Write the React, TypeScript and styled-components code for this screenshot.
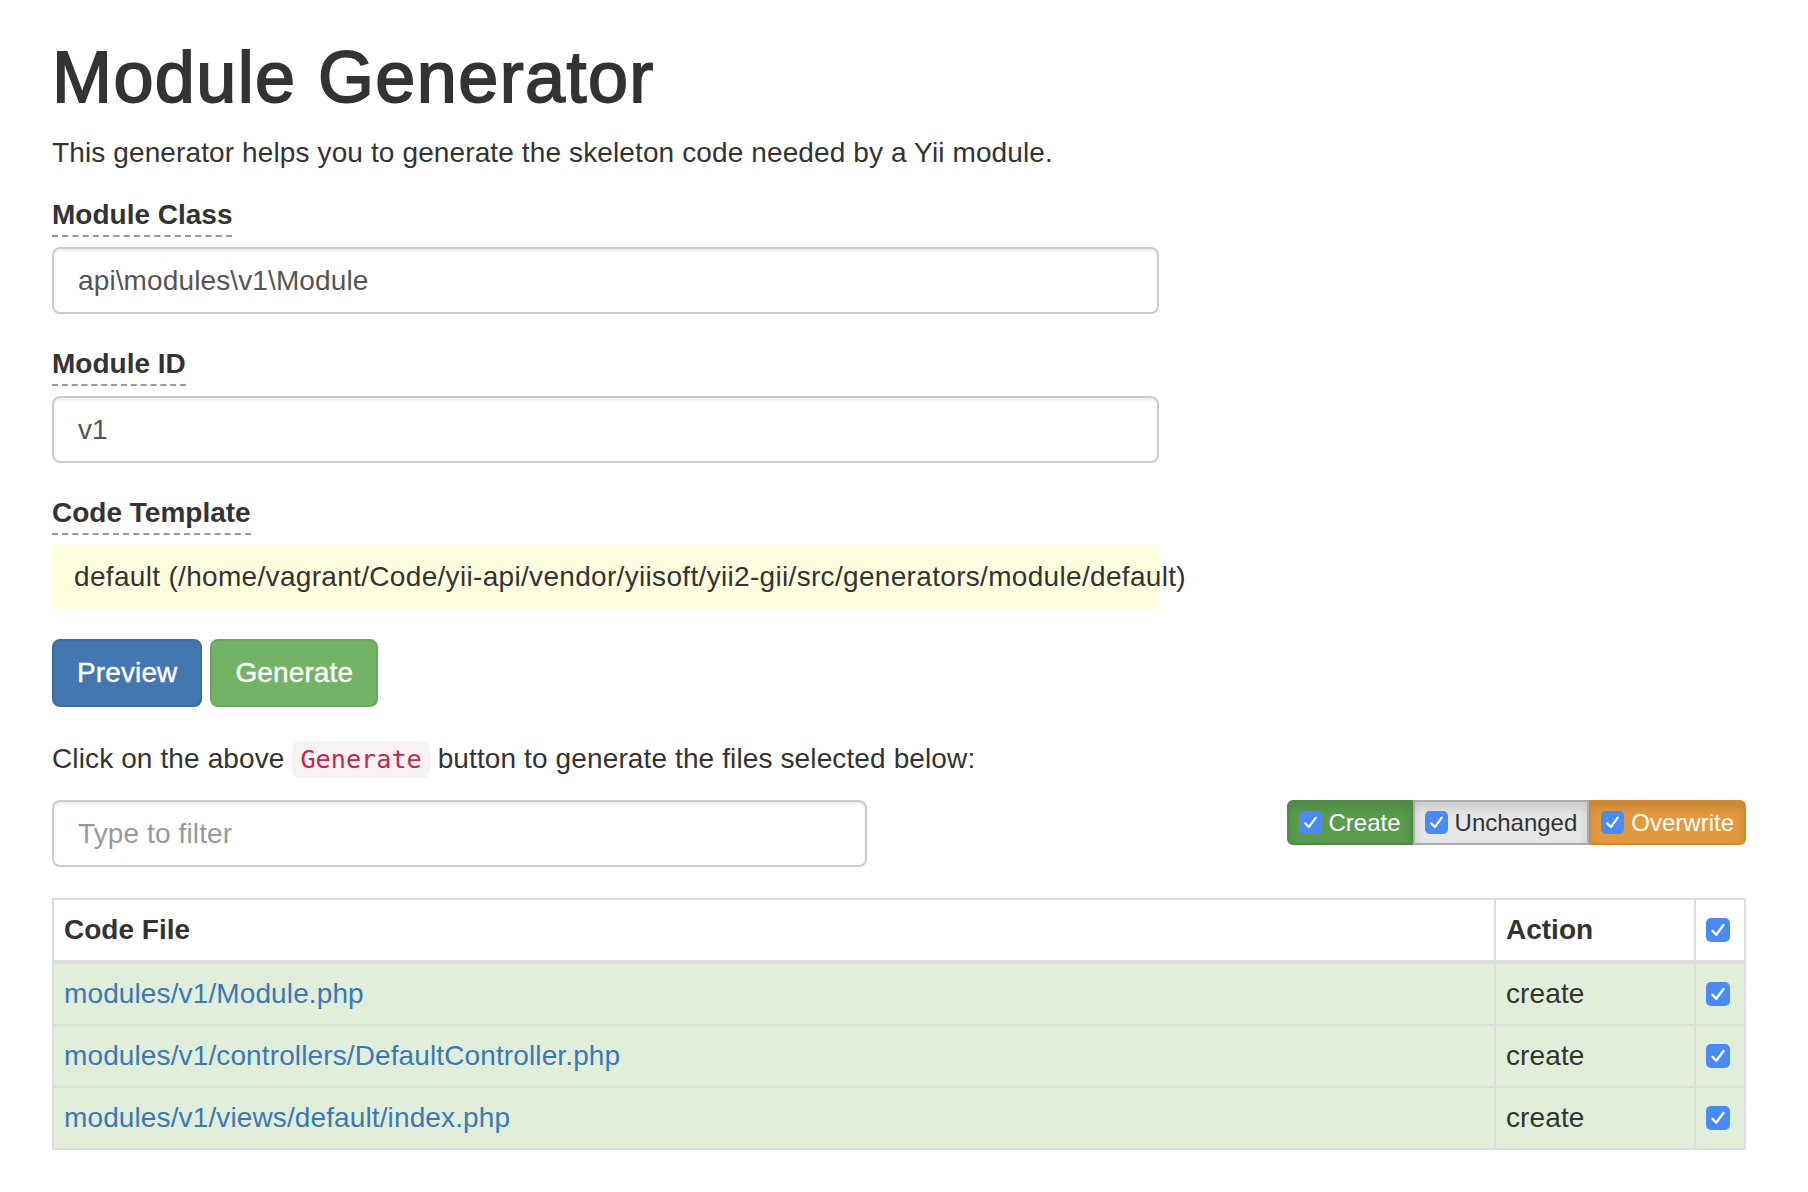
import styled, { createGlobalStyle } from "styled-components";

const GlobalStyle = createGlobalStyle`
  html, body {
    margin: 0;
    padding: 0;
    background: #fff;
  }
  body {
    font-family: "Liberation Sans", Helvetica, Arial, sans-serif;
    font-size: 28px;
    line-height: 40px;
    letter-spacing: 0.12px;
    color: #333;
  }
  * {
    box-sizing: border-box;
  }
`;

const Page = styled.div`
  padding: 0 62px 40px 52px;
`;

const Title = styled.h1`
  margin: 38px 0 16px;
  font-size: 72px;
  line-height: 79px;
  font-weight: 500;
  letter-spacing: 1.4px;
  -webkit-text-stroke: 1.8px #333;
  color: #333;
`;

const Text = styled.p<{ $gap?: number }>`
  margin: 0 0 ${(p) => p.$gap ?? 22}px;
`;

const FormColumn = styled.div`
  width: 1107px;
`;

const FormGroup = styled.div`
  margin-bottom: 30px;
`;

const HelpLabel = styled.label`
  display: inline-block;
  margin-bottom: 10px;
  font-weight: bold;
  letter-spacing: 0;
  border-bottom: 2px dashed #999;
  cursor: help;
`;

const TextInput = styled.input<{ $width?: number }>`
  display: block;
  width: ${(p) => (p.$width ? `${p.$width}px` : "100%")};
  height: 67px;
  padding: 12px 24px;
  font-family: inherit;
  font-size: 28px;
  letter-spacing: 0.12px;
  color: #555;
  background: #fff;
  border: 2px solid #ccc;
  border-radius: 8px;
  box-shadow: inset 0 2px 2px rgba(0, 0, 0, 0.075);
  outline: none;

  &::placeholder {
    color: #999;
  }
`;

const StickyValue = styled.div`
  height: 64px;
  padding: 12px 22px;
  background: #ffffe0;
  white-space: pre;
  letter-spacing: 0.32px;
`;

const ButtonRow = styled.div`
  display: flex;
  gap: 8px;
  margin-bottom: 32px;
`;

const buttonColors = {
  primary: { bg: "#4277b0", border: "#3a6ea5" },
  success: { bg: "#72b365", border: "#68aa5b" },
};

const Button = styled.button<{ $variant: "primary" | "success" }>`
  height: 68px;
  padding: 0 23px;
  font-family: inherit;
  font-size: 28px;
  letter-spacing: 0.12px;
  color: #fff;
  -webkit-text-stroke: 0.4px #fff;
  background: ${(p) => buttonColors[p.$variant].bg};
  border: 2px solid ${(p) => buttonColors[p.$variant].border};
  border-radius: 8px;
  cursor: pointer;
`;

const Code = styled.code`
  padding: 4px 8px;
  font-family: "DejaVu Sans Mono", Menlo, monospace;
  font-size: 25.2px;
  letter-spacing: 0;
  color: #c7254e;
  background: #f9f2f4;
  border-radius: 8px;
`;

const FilterRow = styled.div`
  display: flex;
  justify-content: space-between;
  align-items: flex-start;
  margin-bottom: 31px;
`;

const ToggleGroup = styled.div`
  display: flex;
`;

const toggleColors = {
  create: { bg: "#5a9b4f", border: "#4f8a44", color: "#fff" },
  unchanged: { bg: "#e6e6e6", border: "#adadad", color: "#333" },
  overwrite: { bg: "#e39a3e", border: "#d08a30", color: "#fff" },
};

const Toggle = styled.label<{ $kind: keyof typeof toggleColors }>`
  display: flex;
  align-items: center;
  gap: 7px;
  height: 45px;
  padding: 0 10px;
  font-size: 24px;
  line-height: 36px;
  letter-spacing: 0;
  color: ${(p) => toggleColors[p.$kind].color};
  background: ${(p) => toggleColors[p.$kind].bg};
  border: 2px solid ${(p) => toggleColors[p.$kind].border};
  box-shadow: inset 0 6px 10px rgba(0, 0, 0, 0.125);

  &:first-child {
    border-radius: 6px 0 0 6px;
  }
  &:last-child {
    border-radius: 0 6px 6px 0;
  }
`;

const Table = styled.table`
  width: 100%;
  border-collapse: collapse;
  table-layout: fixed;
  border: 2px solid #ddd;
`;

const HeadCell = styled.th<{ $width?: number }>`
  width: ${(p) => (p.$width ? `${p.$width}px` : "auto")};
  padding: 10px;
  text-align: left;
  font-weight: bold;
  letter-spacing: 0;
  border: 2px solid #ddd;
  border-bottom-width: 4px;
  background: #fff;
`;

const Row = styled.tr`
  background: #e1eed9;
`;

const Cell = styled.td`
  padding: 10px;
  border: 2px solid #ddd;
`;

const FileLink = styled.a`
  color: #3b79b6;
  text-decoration: none;
`;

const CheckBox = styled.span<{ $size: number; $inline?: boolean }>`
  display: block;
  width: ${(p) => p.$size}px;
  height: ${(p) => p.$size}px;
  margin: ${(p) => (p.$inline ? 0 : (40 - p.$size) / 2)}px 0;

  svg {
    display: block;
    width: 100%;
    height: 100%;
  }
`;

const Check = ({ size = 24, inline }: { size?: number; inline?: boolean }) => (
  <CheckBox $size={size} $inline={inline}>
    <svg viewBox="0 0 24 24">
      <rect x="0" y="0" width="24" height="24" rx="5" fill="#4a8af4" />
      <polyline
        points="6.5,12.8 10.2,16.8 17.5,7"
        fill="none"
        stroke="#fff"
        strokeWidth="2.3"
        strokeLinecap="round"
        strokeLinejoin="round"
      />
    </svg>
  </CheckBox>
);

const files = [
  "modules/v1/Module.php",
  "modules/v1/controllers/DefaultController.php",
  "modules/v1/views/default/index.php",
];

export default function App() {
  return (
    <>
      <GlobalStyle />
      <Page>
        <Title>Module Generator</Title>
        <Text>This generator helps you to generate the skeleton code needed by a Yii module.</Text>

        <FormColumn>
          <FormGroup>
            <HelpLabel>Module Class</HelpLabel>
            <TextInput defaultValue={"api\\modules\\v1\\Module"} />
          </FormGroup>
          <FormGroup>
            <HelpLabel>Module ID</HelpLabel>
            <TextInput defaultValue="v1" />
          </FormGroup>
          <FormGroup>
            <HelpLabel>Code Template</HelpLabel>
            <StickyValue>
              default (/home/vagrant/Code/yii-api/vendor/yiisoft/yii2-gii/src/generators/module/default)
            </StickyValue>
          </FormGroup>
          <ButtonRow>
            <Button $variant="primary">Preview</Button>
            <Button $variant="success">Generate</Button>
          </ButtonRow>
        </FormColumn>

        <Text $gap={20}>
          Click on the above <Code>Generate</Code> button to generate the files selected below:
        </Text>

        <FilterRow>
          <TextInput $width={815} placeholder="Type to filter" />
          <ToggleGroup>
            <Toggle $kind="create">
              <Check size={23} inline />
              Create
            </Toggle>
            <Toggle $kind="unchanged">
              <Check size={23} inline />
              Unchanged
            </Toggle>
            <Toggle $kind="overwrite">
              <Check size={23} inline />
              Overwrite
            </Toggle>
          </ToggleGroup>
        </FilterRow>

        <Table>
          <thead>
            <tr>
              <HeadCell>Code File</HeadCell>
              <HeadCell $width={200}>Action</HeadCell>
              <HeadCell $width={50}>
                <Check size={24} />
              </HeadCell>
            </tr>
          </thead>
          <tbody>
            {files.map((file) => (
              <Row key={file}>
                <Cell>
                  <FileLink href="#">{file}</FileLink>
                </Cell>
                <Cell>create</Cell>
                <Cell>
                  <Check size={24} />
                </Cell>
              </Row>
            ))}
          </tbody>
        </Table>
      </Page>
    </>
  );
}
